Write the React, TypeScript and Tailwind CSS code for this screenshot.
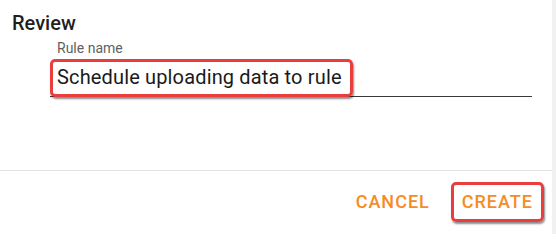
export default function App() {
  return (
    <div className="w-[556px] h-[234px] flex bg-white font-['Roboto',sans-serif]">
      <div className="w-[552px] flex flex-col">
        {/* Title */}
        <h2 className="pl-3 pt-[11px] text-[20px] leading-6 font-medium text-[#1f1f1f]">Review</h2>

        {/* Rule name field */}
        <div className="ml-[50px] w-[482px] mt-[5px]">
          <label className="block pl-[7px] text-[14px] leading-4 text-[#5f5f5f]">Rule name</label>
          <div className="mt-[3px] border-b border-[#3a3a3a]">
            <span className="block w-fit -mb-px pl-1 pr-[8px] pt-[3px] pb-[5px] border-[3px] border-[#ea3e3e] rounded-[5px] shadow-[1px_2px_2px_rgba(0,0,0,0.45)] text-[20px] leading-6 tracking-[0.15px] text-[#1a1a1a]">
              Schedule uploading data to rule
            </span>
          </div>
        </div>

        <div className="flex-1" />

        {/* Actions */}
        <div className="border-t border-[#e3e3e3] flex items-center justify-end gap-[21px] pr-2 pt-[11px] pb-[12px]">
          <button className="text-[18px] leading-[34px] font-medium tracking-[1px] text-[#f68b1f]">CANCEL</button>
          <button className="px-2 border-[3px] border-[#ea3e3e] rounded-[5px] shadow-[1px_2px_2px_rgba(0,0,0,0.45)] text-[18px] leading-[34px] font-medium tracking-[1px] text-[#f68b1f]">
            CREATE
          </button>
        </div>
      </div>
      <div className="w-1 bg-[#f1f1f1]" />
    </div>
  );
}
